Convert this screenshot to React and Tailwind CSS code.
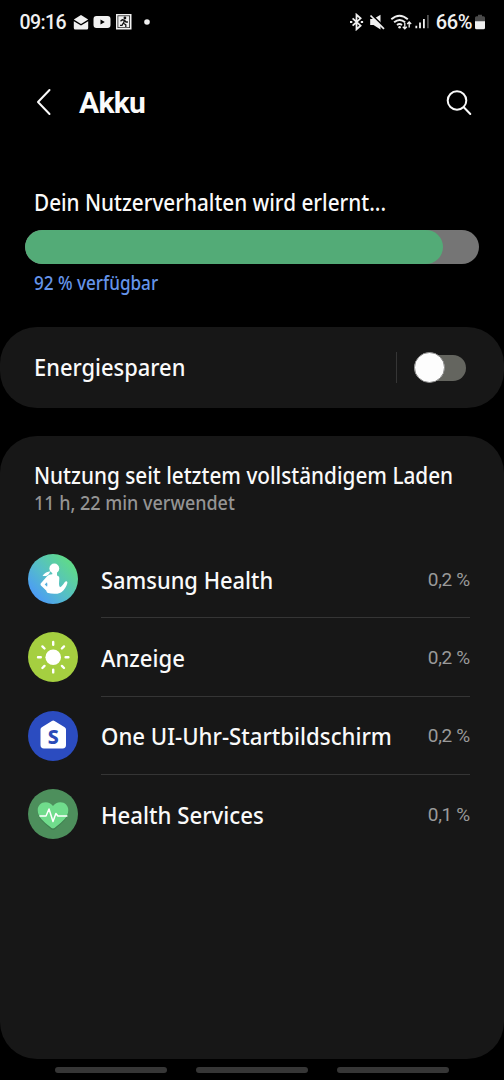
const apps = [
    { name: 'Samsung Health', usage: '0,2 %', Icon: SamsungHealthIcon, scale: 'scale-x-[0.912]' },
    { name: 'Anzeige', usage: '0,2 %', Icon: DisplayIcon, scale: 'scale-x-[0.92]' },
    { name: 'One UI-Uhr-Startbildschirm', usage: '0,2 %', Icon: WatchHomeIcon, scale: 'scale-x-[0.925]' },
    { name: 'Health Services', usage: '0,1 %', Icon: HealthServicesIcon, scale: 'scale-x-[0.925]' },
];

function SamsungHealthIcon() {
    return (
        <svg viewBox="0 0 50 50" className="w-[50px] h-[50px] shrink-0">
            <defs>
                <linearGradient id="health" x1="0.15" y1="0.85" x2="0.85" y2="0.2">
                    <stop offset="0" stopColor="#4c9cf5" />
                    <stop offset="0.45" stopColor="#55bdc9" />
                    <stop offset="1" stopColor="#5fd98c" />
                </linearGradient>
            </defs>
            <circle cx="25" cy="25" r="25" fill="url(#health)" />
            <circle cx="26.3" cy="14.5" r="4.900" fill="#fff" />
            <path d="M22.500 17.200c-3.200.2-6 1.800-8 4.500 2.600.7 4.500.3 5.800-1 .8-.9 1.400-2.200 2.200-3.500z" fill="#fff" />
            <path d="M24.300 17h4.700v4.600c1.600.4 2.400 1.400 2.300 2.900l-.3 5.500c0 1.300.3 2.300 1 3.200 1.700-1 3.400-2.700 4.300-4.500.6-1.200 1.300-1.700 2.100-1.500.9.2 1.200 1 .9 2-.9 3.400-2.900 6.500-5.600 8.700-1.600 1.200-3.600 1.700-6 1.800-3 .1-5.500-.1-7.500-.7-1.100-.4-1.800-1.200-1.800-2.300l-5.200-4.900c-.8-.8-.9-1.700-.3-2.500l6.200-7c1.200-1.300 2.900-1.900 5.200-2z" fill="#fff" />
            <path d="M19 28.200l-2.300 2.300 2.400 2.200c.4-1.400.4-2.900-.1-4.500z" fill="#54aede" />
        </svg>
    );
}

function DisplayIcon() {
    return (
        <svg viewBox="0 0 50 50" className="w-[50px] h-[50px] shrink-0">
            <circle cx="25" cy="25" r="25" fill="#a5cf40" />
            <circle cx="25.200" cy="25.200" r="7.800" fill="#fff" />
            <g stroke="#fff" strokeWidth="2.400" strokeLinecap="round">
                <path d="M25.200 12.800v-2.800M25.200 40.400v-2.800M12.800 25.200h-2.800M40.400 25.200h-2.800M16.500 16.500l-2.100-2.100M33.900 33.900l2.100 2.100M33.900 16.500l2.100-2.100M16.500 33.900l-2.100 2.100" />
            </g>
        </svg>
    );
}

function WatchHomeIcon() {
    return (
        <svg viewBox="0 0 50 50" className="w-[50px] h-[50px] shrink-0">
            <circle cx="25" cy="25" r="25" fill="#2b4cc0" />
            <path d="M23.900 9.900q1.300-.9 2.600 0l10.200 6.300q1.300.8 1.300 2.300v15.600q0 3.400-3.400 3.400H15.900q-3.400 0-3.400-3.400V18.500q0-1.500 1.300-2.300z" fill="#fff" />
            <text x="25.200" y="32.500" textAnchor="middle" fontSize="19.500" fontWeight="800" fill="#2b4cb8" fontFamily="'Noto Sans', sans-serif">S</text>
        </svg>
    );
}

function HealthServicesIcon() {
    return (
        <svg viewBox="0 0 50 50" className="w-[50px] h-[50px] shrink-0">
            <circle cx="25" cy="25" r="25" fill="#4d8f5c" />
            <path d="M25 39.800c-1 0-2-.7-3.300-1.900C15.800 32.900 9.700 28.500 9.700 21.300c0-4.600 3.400-8 7.900-8 3.100 0 5.700 1.400 7.400 3.900 1.700-2.500 4.300-3.900 7.400-3.900 4.500 0 7.900 3.400 7.900 8 0 7.200-6.100 11.600-12 16.600-1.300 1.200-2.300 1.900-3.300 1.900z" fill="#3f7f50" transform="translate(0 1)" />
            <path d="M25 39.500c-1 0-2-.7-3.300-1.900C15.800 32.600 9.700 28.200 9.700 21.200c0-4.600 3.400-8 7.900-8 3.100 0 5.700 1.400 7.400 3.900 1.700-2.500 4.300-3.900 7.400-3.900 4.500 0 7.900 3.400 7.900 8 0 7-6.100 11.400-12 16.400-1.300 1.200-2.300 1.900-3.300 1.900z" fill="#70dc8c" />
            <path d="M12 27h6l3-7 4 12.500 2.900-8 2 2.500h9" fill="none" stroke="#fff" strokeWidth="1.500" strokeLinejoin="round" strokeLinecap="round" />
        </svg>
    );
}

function StatusBar() {
    return (
        <div className="flex items-center h-11 pl-[19.5px] pr-[19px] font-['Roboto',sans-serif] text-[#f0f0f0]">
            <span className="text-[19.5px] leading-[43px] w-[53.5px] tracking-[-0.6px]">09:16</span>
            {/* Notifications */}
            <svg viewBox="0 0 80 18" className="w-[80px] h-[18px]" fill="#f0f0f0">
                <path d="M8 2l7.200 4.500L8 11 .8 6.500z" />
                <path d="M.8 8.200L8 12.600l7.200-4.400V15q0 1.500-1.500 1.500H2.300Q.8 16.500.8 15z" />
                <path d="M23.500 3h11q3 0 3 3v6q0 3-3 3h-11q-3 0-3-3V6q0-3 3-3zm4 3.400v5.200l4.300-2.600z" fillRule="evenodd" />
                <path d="M43 1h15.500v15.500H43z" />
                <path d="M44.500 2.400h12.500v12.600H44.500z" fill="#222" />
                <path d="M45.300 3.200h10.900V14.300H45.300z" />
                <circle cx="51.900" cy="4.900" r="1.400" fill="#111" />
                <path d="M47.500 8.300l1.800-1.500 2.200.4-1 3.100 2.300 1.500v2.200M50.300 10l-1.300 2.300h-2M51.500 7.300l1.500 1.700h1.900" fill="none" stroke="#111" strokeWidth="1.300" />
                <circle cx="74" cy="9" r="2.800" />
            </svg>
            {/* Connectivity */}
            <svg viewBox="0 0 80 18" className="w-[80px] h-[18px] ml-auto mr-[5.500px]" fill="none" stroke="#f0f0f0">
                <path d="M2.600 5.300l8 7.400-4.100 3.600v-14.600l4.100 3.600-8 7.400" strokeWidth="1.800" />
                <path d="M0 9h2.300M10.800 9h2.300" strokeWidth="2.200" />
                <path d="M20.200 6h3.300L30.500 1.800v14.700l-7-4.500h-3.300z" fill="#f0f0f0" stroke="none" />
                <path d="M21.700 1.800l13 12.700" stroke="#000" strokeWidth="1.800" />
                <path d="M20.500 2.500l13.500 13.300" strokeWidth="1.700" />
                <path d="M41.300 6.300q8.200-7.300 16.500 0M44.100 9.300q5.500-4.800 11 0" strokeWidth="1.900" />
                <path d="M47 12q2.500-2 5 0" strokeWidth="1.700" />
                <circle cx="49.600" cy="14.300" r="1.300" fill="#f0f0f0" stroke="none" />
                <path d="M54.800 9.800v6M52.800 13.800l2 2 2-2M59.200 14.500v-5.500M57.200 11l2-2 2 2" strokeWidth="1.300" />
                <path d="M66.300 12.700v2.600M70 9.500v5.800M73.900 6v9.300" strokeWidth="1.800" />
                <path d="M77.900 2v13.300" stroke="#555" strokeWidth="1.700" />
            </svg>
            <span className="text-[20px] leading-[43px] font-medium tracking-[-0.4px] mr-[3px]">66%</span>
            <svg viewBox="0 0 10 16" className="w-[10px] h-[16px]">
                <path d="M3 .8h4v1.500h1.500q1.500 0 1.500 1.500V8H0V3.800q0-1.500 1.500-1.500H3z" fill="#4a4a4a" />
                <path d="M0 7.300h10v6.500q0 1.500-1.500 1.500h-7Q0 15.300 0 13.800z" fill="#f0f0f0" />
            </svg>
        </div>
    );
}

const App = () => {
    return (
        <div className="w-[504px] h-[1080px] bg-black text-[#fafafa] flex flex-col overflow-hidden font-['Noto_Sans',sans-serif] font-medium whitespace-nowrap">
            <StatusBar />

            {/* Header */}
            <header className="flex items-center h-[117px] pl-[36px] pr-[31px]">
                <svg viewBox="0 0 16 28" className="w-4 h-7 -mt-px" fill="none" stroke="#fafafa" strokeWidth="2" strokeLinecap="round" strokeLinejoin="round">
                    <path d="M13.500 2L2 14l11.500 12" />
                </svg>
                <h1 className="ml-[27px] font-['Roboto',sans-serif] font-bold text-[30px] leading-[36px] tracking-[-0.7px]">Akku</h1>
                <svg viewBox="0 0 28 28" className="w-7 h-7 ml-auto" fill="none" stroke="#fafafa" strokeWidth="2" strokeLinecap="round">
                    <circle cx="12" cy="11.500" r="9.300" />
                    <path d="M18.800 18.300l6.500 6.700" />
                </svg>
            </header>

            {/* Battery level */}
            <section className="h-[166px] pt-[25px] px-[25px]">
                <h2 className="ml-[9px] w-max origin-left scale-x-[0.9] text-[23px] leading-[33px]">Dein Nutzerverhalten wird erlernt...</h2>
                <div className="mt-[11px] h-[34px] w-[454px] rounded-[17px] bg-[#757575] overflow-hidden">
                    <div className="h-full rounded-[17px] bg-[#53ab77]" style={{ width: '92%' }} />
                </div>
                <p className="ml-[9px] mt-[7px] w-max origin-left scale-x-[0.9] text-[19px] leading-[25px] text-[#6594ea]">92 % verfügbar</p>
            </section>

            {/* Power saving */}
            <section className="flex items-center h-[81px] shrink-0 rounded-[37px] bg-[#171717] pl-[34px] pr-[38px]">
                <span className="origin-left scale-x-[0.912] text-[24px] leading-[32px] -mt-px">Energiesparen</span>
                <div className="ml-auto w-px h-[31px] bg-[#353535]" />
                <div className="ml-[17px] w-[52px] h-[26px] rounded-full bg-[#64655f] flex items-center">
                    <div className="w-[31px] h-[31px] shrink-0 rounded-full bg-[#fdfdfd] border border-[#8c8c8c]" />
                </div>
            </section>

            {/* Usage since last full charge */}
            <section className="mt-[28px] h-[623px] shrink-0 rounded-[37px] bg-[#171717] pt-[23px] pl-[28px] pr-[34px]">
                <h2 className="ml-[6px] w-max origin-left scale-x-[0.902] text-[23px] leading-[32px]">Nutzung seit letztem vollständigem Laden</h2>
                <p className="ml-[6px] w-max origin-left scale-x-[0.945] text-[19px] leading-[25px] text-[#949494]">11 h, 22 min verwendet</p>
                <ul className="mt-[24px]">
                    {apps.map(({ name, usage, Icon, scale }, i) => (
                        <li key={name} className="flex items-center h-[78.3px]">
                            <Icon />
                            <div className={`ml-[23px] pt-[2px] flex-1 h-full flex items-center justify-between ${i < apps.length - 1 ? 'border-b-[1.5px] border-[#353535]' : ''}`}>
                                <span className={`w-0 origin-left text-[24px] leading-[32px] ${scale}`}>
                                    <span className="inline-block">{name}</span>
                                </span>
                                <span className="font-['Roboto',sans-serif] font-normal text-[19px] leading-[32px] tracking-[-0.3px] text-[#9a9a9a]">{usage}</span>
                            </div>
                        </li>
                    ))}
                </ul>
            </section>

            {/* Navigation gestures */}
            <div className="flex gap-[29px] pl-[55px] mt-[8px]">
                <div className="w-[112px] h-[6px] rounded-full bg-[#363636]" />
                <div className="w-[112px] h-[6px] rounded-full bg-[#363636]" />
                <div className="w-[112px] h-[6px] rounded-full bg-[#363636]" />
            </div>
        </div>
    );
};

export default App;
